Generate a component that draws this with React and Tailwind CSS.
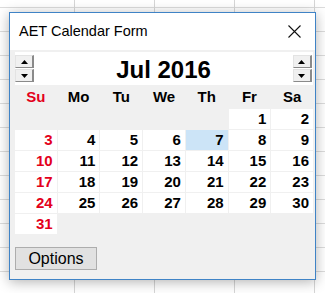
import React from "react";

var DAYS = ["Su", "Mo", "Tu", "We", "Th", "Fr", "Sa"];

function buildCells() {
  var cells = [];
  for (var i = 0; i < 5; i++) cells.push(null);
  for (var d = 1; d <= 31; d++) cells.push(d);
  while (cells.length < 42) cells.push(null);
  return cells;
}

function SpinButton({ up }) {
  return (
    <div className="w-[19px] h-[13px] bg-[#f0f0f0] border-t border-l border-t-[#e3e3e3] border-l-[#e3e3e3] border-r-2 border-b border-r-[#8a8a8a] border-b-[#8a8a8a] flex items-center justify-center">
      <svg width="7" height="4" viewBox="0 0 7 4">
        {up ? <polygon points="3.5,0 7,4 0,4" fill="#000" /> : <polygon points="0,0 7,0 3.5,4" fill="#000" />}
      </svg>
    </div>
  );
}

function Spinner() {
  return (
    <div className="flex flex-col gap-px">
      <SpinButton up />
      <SpinButton />
    </div>
  );
}

export default function App() {
  var cells = buildCells();
  return (
    <div className="w-[325px] h-[293px] overflow-hidden bg-white pl-[9px] pt-[12px] bg-[linear-gradient(to_right,#d6d6d6_1px,transparent_1px),linear-gradient(to_bottom,#dcdcdc_1px,transparent_1px)] bg-[size:80px_24px] bg-[position:74px_7px]">
      <div className="w-[307px] h-[268px] border border-[#3f83c6] flex flex-col shadow-[0_2px_12px_rgba(0,0,0,0.3)] font-['Liberation_Sans',Arial,sans-serif]">
        {/* title bar */}
        <div className="h-[37px] bg-white flex items-center justify-between pl-[9px] pr-[14px]">
          <span className="text-[14.5px] text-black">AET Calendar Form</span>
          <svg width="13" height="13" viewBox="0 0 13 13">
            <path d="M0.5 0.5 L12.5 12.5 M12.5 0.5 L0.5 12.5" stroke="#111" strokeWidth="1.1" fill="none" />
          </svg>
        </div>

        {/* body */}
        <div className="flex-1 bg-[#f0f0f0] pl-[5px] pr-[2px] pt-[2px]">
          <div className="h-[33px] bg-white flex items-center justify-between pr-[1px]">
            <Spinner />
            <span className="text-[24px] font-bold text-black leading-none pt-[2px]">Jul 2016</span>
            <Spinner />
          </div>

          <div className="h-[24px] grid grid-cols-7 gap-x-px items-center">
            {DAYS.map(function (d, i) {
              return (
                <div key={d} className={"text-center text-[15px] font-bold " + (i === 0 ? "text-[#e3001b]" : "text-black")}>
                  {d}
                </div>
              );
            })}
          </div>

          <div className="grid grid-cols-7 gap-x-px gap-y-px">
            {cells.map(function (c, i) {
              if (c === null) return <div key={i} className="h-[20px]"></div>;
              var red = i % 7 === 0;
              var sel = c === 7;
              return (
                <div
                  key={i}
                  className={"h-[20px] text-right pr-[4px] text-[15px] font-bold leading-[20px] " + (sel ? "bg-[#cce4f7] " : "bg-white ") + (red ? "text-[#e3001b]" : "text-black")}
                >
                  {c}
                </div>
              );
            })}
          </div>

          <button className="mt-[13px] w-[82px] h-[23px] border border-[#adadad] bg-[#e1e1e1] text-[16px] text-black leading-none flex items-center justify-center">
            Options
          </button>
        </div>
      </div>
    </div>
  );
}
